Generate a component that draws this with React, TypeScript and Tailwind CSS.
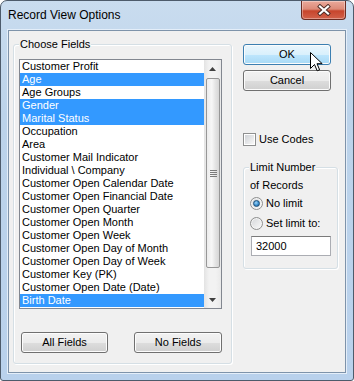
import React from 'react';

type Field = { name: string; selected?: boolean };

const FIELDS: Field[] = [
  { name: 'Customer Profit' },
  { name: 'Age', selected: true },
  { name: 'Age Groups' },
  { name: 'Gender', selected: true },
  { name: 'Marital Status', selected: true },
  { name: 'Occupation' },
  { name: 'Area' },
  { name: 'Customer Mail Indicator' },
  { name: 'Individual \\ Company' },
  { name: 'Customer Open Calendar Date' },
  { name: 'Customer Open Financial Date' },
  { name: 'Customer Open Quarter' },
  { name: 'Customer Open Month' },
  { name: 'Customer Open Week' },
  { name: 'Customer Open Day of Month' },
  { name: 'Customer Open Day of Week' },
  { name: 'Customer Key (PK)' },
  { name: 'Customer Open Date (Date)' },
  { name: 'Birth Date', selected: true },
];

// Win7 push button; `hot` is the hovered/default blue look
function Button({
  label,
  hot,
  className,
}: {
  label: string;
  hot?: boolean;
  className?: string;
}) {
  return (
    <div
      className={[
        'flex items-center justify-center rounded-[3px] border leading-none shadow-[inset_0_0_0_1px_#fcfcfc]',
        hot
          ? 'border-[#3c7fb1] bg-[linear-gradient(#eaf6fd_0%,#d9f0fc_50%,#bee6fd_51%,#a7d9f5_100%)]'
          : 'border-[#707070] bg-[linear-gradient(#f2f2f2_0%,#ebebeb_50%,#dddddd_51%,#cfcfcf_100%)]',
        className ?? '',
      ].join(' ')}
    >
      {label}
    </div>
  );
}

function GroupBox({
  label,
  className,
  children,
}: {
  label: string;
  className?: string;
  children: React.ReactNode;
}) {
  return (
    <div
      className={[
        'relative rounded-[3px] border border-[#d5dfe5] shadow-[inset_1px_1px_0_#fff,1px_1px_0_#fff]',
        className ?? '',
      ].join(' ')}
    >
      <span className="absolute -top-[7px] left-[5px] bg-[#f0f0f0] px-[1px] leading-[13px]">
        {label}
      </span>
      {children}
    </div>
  );
}

function Radio({ checked }: { checked?: boolean }) {
  return (
    <span className="flex h-[13px] w-[13px] items-center justify-center rounded-full border border-[#8e8f8f] bg-[linear-gradient(135deg,#d4d6d9,#fbfbfb)] shadow-[inset_0_0_0_1px_#f4f4f4]">
      {checked && (
        <span className="h-[7px] w-[7px] rounded-full border border-[#1d4f78] bg-[radial-gradient(circle_at_40%_35%,#9fd4f6_0%,#3a8fd0_55%,#1c5a8e_100%)]" />
      )}
    </span>
  );
}

function ScrollBar() {
  return (
    <div className="flex w-[17px] flex-col bg-[linear-gradient(90deg,#e3e3e3,#f2f2f2_30%,#f2f2f2_70%,#e9e9e9)]">
      <div className="flex h-[17px] items-center justify-center">
        <svg width="7" height="4" viewBox="0 0 7 4">
          <path d="M3.5 0L7 4H0z" fill="#404040" />
        </svg>
      </div>
      <div className="ml-[2px] mt-[1px] flex h-[190px] w-[14px] flex-col items-center justify-center gap-[1px] rounded-[2px] border border-[#979797] bg-[linear-gradient(90deg,#ececec,#f7f7f7_40%,#e4e4e4_70%,#d6d6d6)]">
        {[0, 1, 2, 3].map((i) => (
          <span key={i} className="h-[1px] w-[7px] bg-[#7b7b7b]" />
        ))}
      </div>
      <div className="flex-1" />
      <div className="flex h-[17px] items-center justify-center">
        <svg width="7" height="4" viewBox="0 0 7 4">
          <path d="M0 0H7L3.5 4z" fill="#404040" />
        </svg>
      </div>
    </div>
  );
}

export default function App() {
  return (
    <div className="relative h-[381px] w-[354px] overflow-hidden bg-white font-['Liberation_Sans',Arial,sans-serif] text-[11px] text-black">
      <div className="flex h-full w-full flex-col rounded-t-[7px] rounded-b-[3px] border border-[#4d5b6b] bg-[linear-gradient(180deg,#c9dcef_0%,#bcd3ea_30%,#b9d1ec_100%)]">
        {/* title bar */}
        <div className="flex h-[29px] items-start">
          <span className="ml-[7px] mt-[7px] text-[12px] leading-[15px]">
            Record View Options
          </span>
          <div className="ml-auto mr-[7px] flex h-[19px] w-[45px] items-center justify-center rounded-b-[4px] border border-t-0 border-[#6b2b21] bg-[linear-gradient(#eaa99b_0%,#dc8a78_45%,#c7452c_55%,#d2614a_100%)] shadow-[inset_0_0_0_1px_rgba(255,255,255,0.35)]">
            <svg width="14" height="12" viewBox="0 0 14 12">
              <path
                d="M3 2.5L11 9.5M11 2.5L3 9.5"
                stroke="#4a2a24"
                strokeWidth="4"
                strokeLinecap="square"
              />
              <path
                d="M3 2.5L11 9.5M11 2.5L3 9.5"
                stroke="#fff"
                strokeWidth="2.2"
                strokeLinecap="square"
              />
            </svg>
          </div>
        </div>

        {/* client area */}
        <div className="mx-[7px] mb-[7px] flex flex-1 border border-[#7e93aa] bg-[#f0f0f0] pl-[4px] pt-[13px] shadow-[0_0_0_1px_#e4eef9]">
          <GroupBox label="Choose Fields" className="h-[320px] w-[219px]">
            <div className="ml-[5px] mt-[14px] flex h-[250px] w-[203px] border border-[#828790] bg-white">
              <div className="w-[184px]">
                {FIELDS.map((f) => (
                  <div
                    key={f.name}
                    className={[
                      'h-[13px] whitespace-nowrap pl-[2px] leading-[13px]',
                      f.selected ? 'bg-[#3399ff] text-white' : '',
                    ].join(' ')}
                  >
                    {f.name}
                  </div>
                ))}
              </div>
              <ScrollBar />
            </div>
            <div className="ml-[7px] mt-[23px] flex gap-[26px]">
              <Button label="All Fields" className="h-[21px] w-[87px]" />
              <Button label="No Fields" className="h-[21px] w-[88px]" />
            </div>
          </GroupBox>

          <div className="ml-[11px] flex flex-col">
            <Button label="OK" hot className="h-[21px] w-[88px]" />
            <Button label="Cancel" className="mt-[5px] h-[21px] w-[88px]" />

            <div className="mt-[42px] flex items-center gap-[3px]">
              <span className="flex h-[13px] w-[13px] items-center justify-center border border-[#8e8f8f] bg-white">
                <span className="h-[9px] w-[9px] bg-[linear-gradient(135deg,#cfd2d6,#f8f8f8)]" />
              </span>
              <span className="leading-[13px]">Use Codes</span>
            </div>

            <GroupBox label="Limit Number" className="mt-[21px] h-[102px] w-[95px]">
              <div className="flex flex-col pl-[6px]">
                <span className="mt-[11px] leading-[13px]">of Records</span>
                <div className="mt-[5px] flex items-center gap-[3px]">
                  <Radio checked />
                  <span className="leading-[13px]">No limit</span>
                </div>
                <div className="mt-[7px] flex items-center gap-[3px]">
                  <Radio />
                  <span className="leading-[13px]">Set limit to:</span>
                </div>
                <div className="ml-[1px] mt-[6px] flex h-[20px] w-[80px] items-center border border-[#abadb3] border-t-[#7a7a7a] bg-white pl-[4px]">
                  32000
                </div>
              </div>
            </GroupBox>
          </div>
        </div>
      </div>

      {/* mouse pointer over OK */}
      <svg
        className="absolute left-[310px] top-[52px]"
        width="13"
        height="20"
        viewBox="0 0 13 20"
      >
        <path
          d="M0.5 0.5V16.5L4.5 12.5L7.2 18.8L9.6 17.8L7 11.7H12.2Z"
          fill="#fff"
          stroke="#000"
          strokeWidth="1"
          strokeLinejoin="miter"
        />
      </svg>
    </div>
  );
}
